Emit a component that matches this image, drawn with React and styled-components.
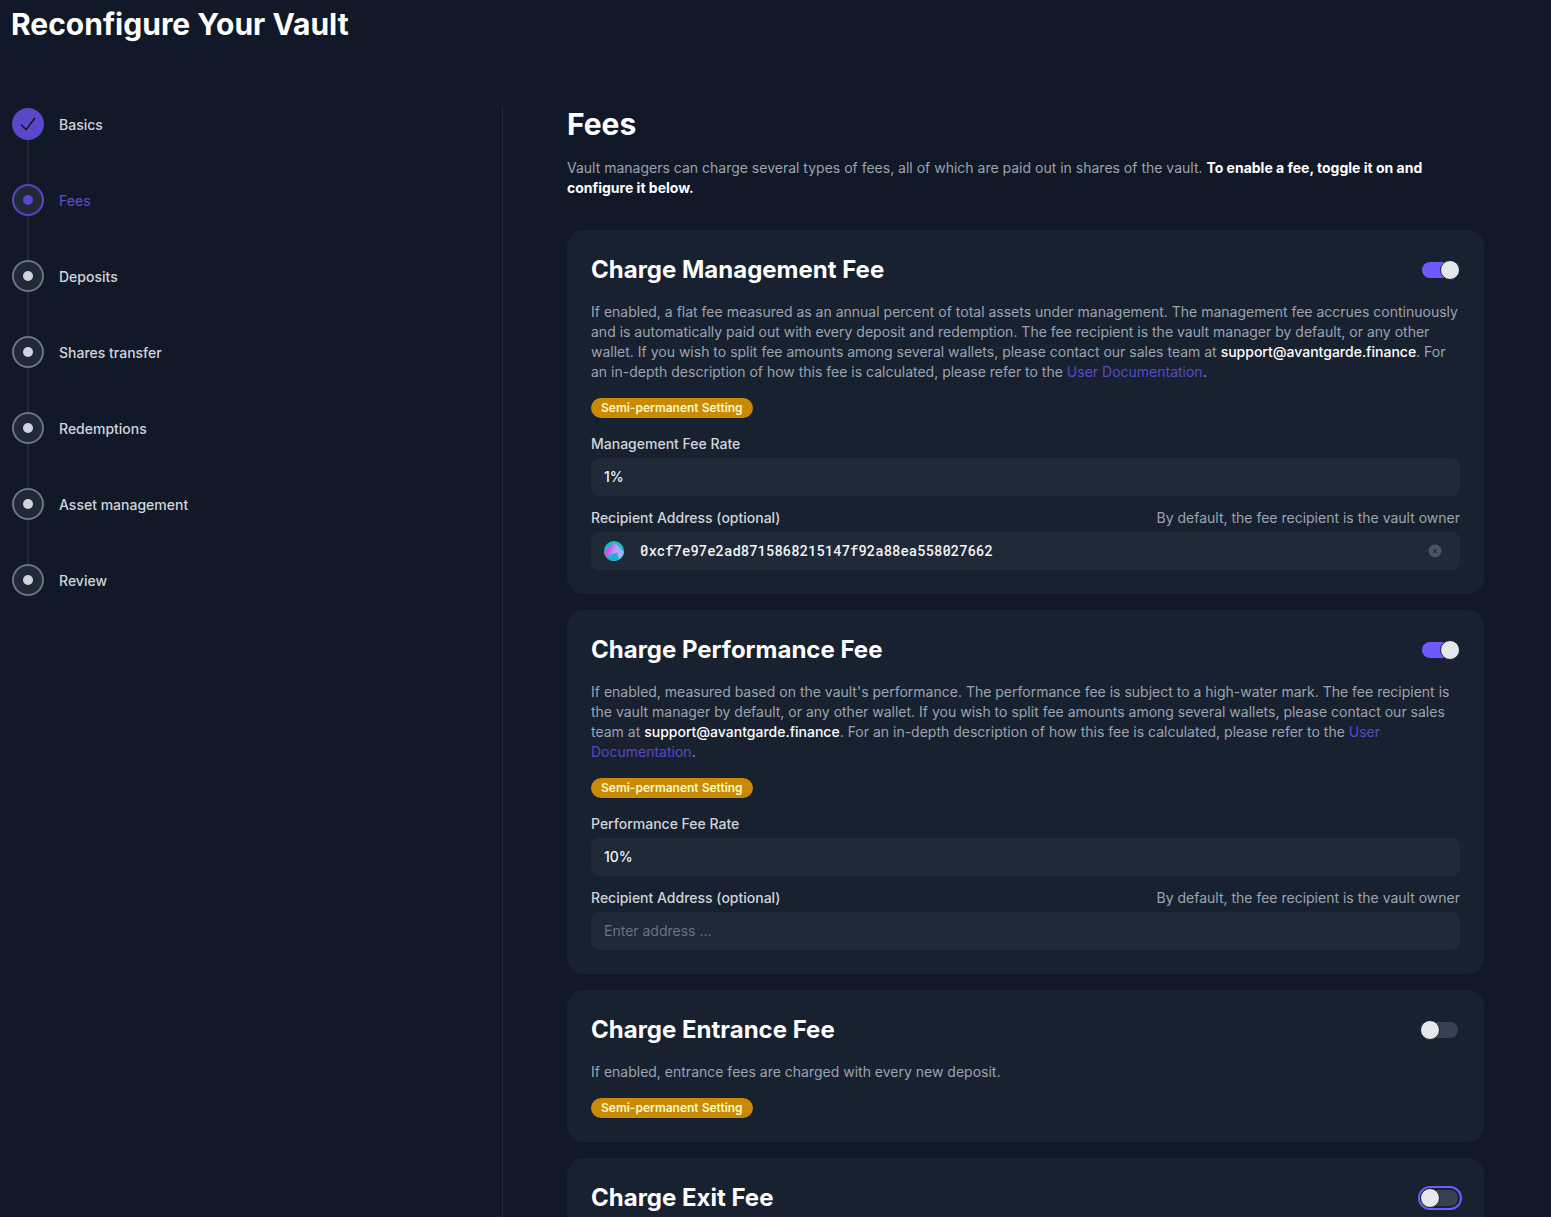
import React, { useState } from "react";
import styled, { createGlobalStyle } from "styled-components";

const GlobalStyle = createGlobalStyle`
  *, *::before, *::after { box-sizing: border-box; }
  body {
    margin: 0;
    background: #111827;
    color: #9ca3af;
    font-family: Inter, "Liberation Sans", sans-serif;
    font-size: 14px;
    line-height: 20px;
  }
  h1, h2, h3, p, ol { margin: 0; padding: 0; }
`;

const Page = styled.div`
  padding: 6px 67px 0 11px;
`;

const PageTitle = styled.h1`
  margin-bottom: 64px;
  color: #fff;
  font-size: 30px;
  line-height: 36px;
  font-weight: 700;
`;

const Columns = styled.div`
  display: grid;
  grid-template-columns: 1fr 2fr;
`;

const StepList = styled.ol`
  && {
    display: flex;
    flex-direction: column;
    padding: 2px 0 0 1px;
    list-style: none;
  }
`;

const Step = styled.li`
  display: grid;
  grid-template-columns: 32px 1fr;
  column-gap: 15px;
`;

const StepRail = styled.div`
  display: flex;
  flex-direction: column;
  align-items: center;
`;

const Connector = styled.span`
  width: 2px;
  height: 44px;
  background: #1f2937;
`;

const stepTone = { done: "#5b47c9", current: "#5b47c9", upcoming: "#6b7280" };

const StepMarker = styled.span`
  display: grid;
  place-items: center;
  width: 32px;
  height: 32px;
  border: 2px solid ${(p) => stepTone[p.$state]};
  border-radius: 50%;
  background: ${(p) => (p.$state === "done" ? "#5b47c9" : "#1f2937")};
`;

const StepDot = styled.span`
  width: 10px;
  height: 10px;
  border-radius: 50%;
  background: ${(p) => (p.$state === "current" ? "#5b47c9" : "#d1d5db")};
`;

const StepLink = styled.a`
  align-self: start;
  justify-self: start;
  color: ${(p) => (p.$state === "current" ? "#5b47c9" : "#d1d5db")};
  line-height: 34px;
  font-weight: 500;
  text-decoration: none;
`;

const Content = styled.main`
  border-left: 1px solid #1f2937;
  padding-left: 64px;
`;

const Heading = styled.h2`
  margin-bottom: 16px;
  color: #fff;
  font-size: 30px;
  line-height: 36px;
  font-weight: 700;
`;

const Strong = styled.strong`
  color: #fff;
  font-weight: ${(p) => p.$weight || 700};
`;

const Cards = styled.div`
  display: flex;
  flex-direction: column;
  gap: 16px;
  margin-top: 32px;
`;

const Card = styled.section`
  display: flex;
  flex-direction: column;
  gap: 16px;
  padding: 24px;
  border-radius: 16px;
  background: #18212f;
`;

const CardHeader = styled.div`
  display: flex;
  align-items: center;
  justify-content: space-between;
`;

const CardTitle = styled.h3`
  color: #fff;
  font-size: 24px;
  line-height: 32px;
  font-weight: 700;
`;

const Switch = styled.input`
  appearance: none;
  display: grid;
  align-items: center;
  width: 40px;
  height: 20px;
  margin: 0;
  border-radius: 10px;
  outline: none;
  cursor: pointer;
  box-shadow: ${(p) => (p.$ring ? "0 0 0 2px #6f5aff" : "none")};

  &::before {
    content: "";
    grid-area: 1 / 1;
    height: 16px;
    margin: 0 2px;
    border-radius: 8px;
    background: #374151;
  }
  &::after {
    content: "";
    grid-area: 1 / 1;
    width: 20px;
    height: 20px;
    border: 1px solid #18212f;
    border-radius: 50%;
    background: #e5e7eb;
  }
  &:checked::before { background: #6f5aff; }
  &:checked::after { justify-self: end; }
  &:focus-visible { box-shadow: 0 0 0 2px #6f5aff; }
`;

const DocLink = styled.a`
  color: #5b47c9;
  text-decoration: none;
`;

const Badge = styled.span`
  align-self: flex-start;
  padding: 0 10px;
  border-radius: 10px;
  background: #ca8a04;
  color: #fef9c3;
  font-size: 12px;
  line-height: 20px;
  font-weight: 600;
`;

const Fields = styled.div`
  display: flex;
  flex-direction: column;
  gap: 12px;
`;

const Field = styled.div`
  display: flex;
  flex-direction: column;
  gap: 4px;
`;

const FieldTop = styled.div`
  display: flex;
  justify-content: space-between;
`;

const Label = styled.label`
  color: #d1d5db;
  font-weight: 500;
`;

const InputBox = styled.div`
  display: flex;
  align-items: center;
  gap: 16px;
  height: 38px;
  padding: 0 17px 0 13px;
  border-radius: 8px;
  background: #1f2937;
`;

const TextInput = styled.input`
  flex: 1;
  min-width: 0;
  padding: 0;
  border: 0;
  outline: none;
  background: transparent;
  color: #f3f4f6;
  font-family: ${(p) => (p.$mono ? '"Roboto Mono", "DejaVu Sans Mono", monospace' : "inherit")};
  font-size: 14px;
  line-height: 20px;
  font-weight: 500;
  &::placeholder { color: #6b7280; opacity: 1; font-weight: 400; }
`;

const ClearButton = styled.button`
  display: flex;
  padding: 0;
  border: 0;
  background: none;
  color: #4b5563;
  cursor: pointer;
`;

function CheckIcon() {
  return (
    <svg width="20" height="20" viewBox="0 0 20 20" fill="none" aria-hidden="true">
      <path d="M3 10.5L8.200 15.500L17 3.800" stroke="#111827" strokeWidth="1.5" />
    </svg>
  );
}

function Avatar() {
  return (
    <svg width="20" height="20" viewBox="0 0 20 20" aria-hidden="true">
      <defs>
        <clipPath id="disc"><circle cx="10" cy="10" r="10" /></clipPath>
        <linearGradient id="peak" gradientUnits="userSpaceOnUse" x1="3" y1="9" x2="18" y2="15">
          <stop offset="0.1" stopColor="#d64df0" />
          <stop offset="0.5" stopColor="#b9a5fa" />
          <stop offset="1" stopColor="#93b4fd" />
        </linearGradient>
      </defs>
      <g clipPath="url(#disc)">
        <rect width="20" height="20" fill="#0fc4b8" />
        <path d="M-1 12L10.500 1.500L21 12V21H0Z" fill="url(#peak)" />
        <path d="M1 16L13 11.500L15.500 21H1Z" fill="#14b4cc" />
      </g>
    </svg>
  );
}

function ClearIcon() {
  return (
    <svg width="16" height="16" viewBox="0 0 16 16" aria-hidden="true">
      <circle cx="8" cy="8" r="6.5" fill="currentColor" />
      <path d="M6.200 6.200L9.800 9.800M9.800 6.200L6.200 9.800" stroke="#1f2937" strokeWidth="1.100" />
    </svg>
  );
}

const steps = [
  ["Basics", "done"],
  ["Fees", "current"],
  ["Deposits", "upcoming"],
  ["Shares transfer", "upcoming"],
  ["Redemptions", "upcoming"],
  ["Asset management", "upcoming"],
  ["Review", "upcoming"],
];

function Stepper() {
  return (
    <nav aria-label="Steps">
      <StepList>
        {steps.map(([name, state], i) => (
          <Step key={name}>
            <StepRail>
              <StepMarker $state={state}>
                {state === "done" ? <CheckIcon /> : <StepDot $state={state} />}
              </StepMarker>
              {i < steps.length - 1 && <Connector />}
            </StepRail>
            <StepLink href="#" $state={state}>{name}</StepLink>
          </Step>
        ))}
      </StepList>
    </nav>
  );
}

function FeeCard({ id, title, on, ring, badge = true, children, fields }) {
  const [enabled, setEnabled] = useState(Boolean(on));
  return (
    <Card>
      <CardHeader>
        <CardTitle><label htmlFor={id}>{title}</label></CardTitle>
        <Switch
          id={id}
          type="checkbox"
          role="switch"
          checked={enabled}
          onChange={(e) => setEnabled(e.target.checked)}
          $ring={ring}
        />
      </CardHeader>
      {children && <p>{children}</p>}
      {badge && <Badge>Semi-permanent Setting</Badge>}
      {fields}
    </Card>
  );
}

function FeeFields({ id, rateLabel, rate, recipient }) {
  const [address, setAddress] = useState(recipient);
  return (
    <Fields>
      <Field>
        <Label htmlFor={`${id}-rate`}>{rateLabel}</Label>
        <InputBox><TextInput id={`${id}-rate`} type="text" defaultValue={rate} /></InputBox>
      </Field>
      <Field>
        <FieldTop>
          <Label htmlFor={`${id}-recipient`}>Recipient Address (optional)</Label>
          <span>By default, the fee recipient is the vault owner</span>
        </FieldTop>
        <InputBox>
          {address && <Avatar />}
          <TextInput
            id={`${id}-recipient`}
            type="text"
            placeholder="Enter address ..."
            value={address}
            onChange={(e) => setAddress(e.target.value)}
            $mono={Boolean(address)}
          />
          {address && (
            <ClearButton type="button" aria-label="Clear" onClick={() => setAddress("")}>
              <ClearIcon />
            </ClearButton>
          )}
        </InputBox>
      </Field>
    </Fields>
  );
}

export default function App() {
  return (
    <>
      <GlobalStyle />
      <Page>
        <PageTitle>Reconfigure Your Vault</PageTitle>
        <Columns>
          <Stepper />
          <Content>
            <Heading>Fees</Heading>
            <p>
              Vault managers can charge several types of fees, all of which are paid out in shares of the vault.{" "}
              <Strong>To enable a fee, toggle it on and configure it below.</Strong>
            </p>
            <Cards>
              <FeeCard
                id="management"
                title="Charge Management Fee"
                on
                fields={
                  <FeeFields
                    id="management"
                    rateLabel="Management Fee Rate"
                    rate="1%"
                    recipient="0xcf7e97e2ad8715868215147f92a88ea558027662"
                  />
                }
              >
                If enabled, a flat fee measured as an annual percent of total assets under management. The management
                fee accrues continuously and is automatically paid out with every deposit and redemption. The fee
                recipient is the vault manager by default, or any other wallet. If you wish to split fee amounts among
                several wallets, please contact our sales team at{" "}
                <Strong $weight={500}>support@avantgarde.finance</Strong>. For an in-depth description of how this fee
                is calculated, please refer to the <DocLink href="#">User Documentation</DocLink>.
              </FeeCard>
              <FeeCard
                id="performance"
                title="Charge Performance Fee"
                on
                fields={
                  <FeeFields id="performance" rateLabel="Performance Fee Rate" rate="10%" recipient="" />
                }
              >
                If enabled, measured based on the vault's performance. The performance fee is subject to a high-water
                mark. The fee recipient is the vault manager by default, or any other wallet. If you wish to split fee
                amounts among several wallets, please contact our sales team at{" "}
                <Strong $weight={500}>support@avantgarde.finance</Strong>. For an in-depth description of how this fee
                is calculated, please refer to the <DocLink href="#">User Documentation</DocLink>.
              </FeeCard>
              <FeeCard id="entrance" title="Charge Entrance Fee">
                If enabled, entrance fees are charged with every new deposit.
              </FeeCard>
              <FeeCard id="exit" title="Charge Exit Fee" ring badge={false} />
            </Cards>
          </Content>
        </Columns>
      </Page>
    </>
  );
}
